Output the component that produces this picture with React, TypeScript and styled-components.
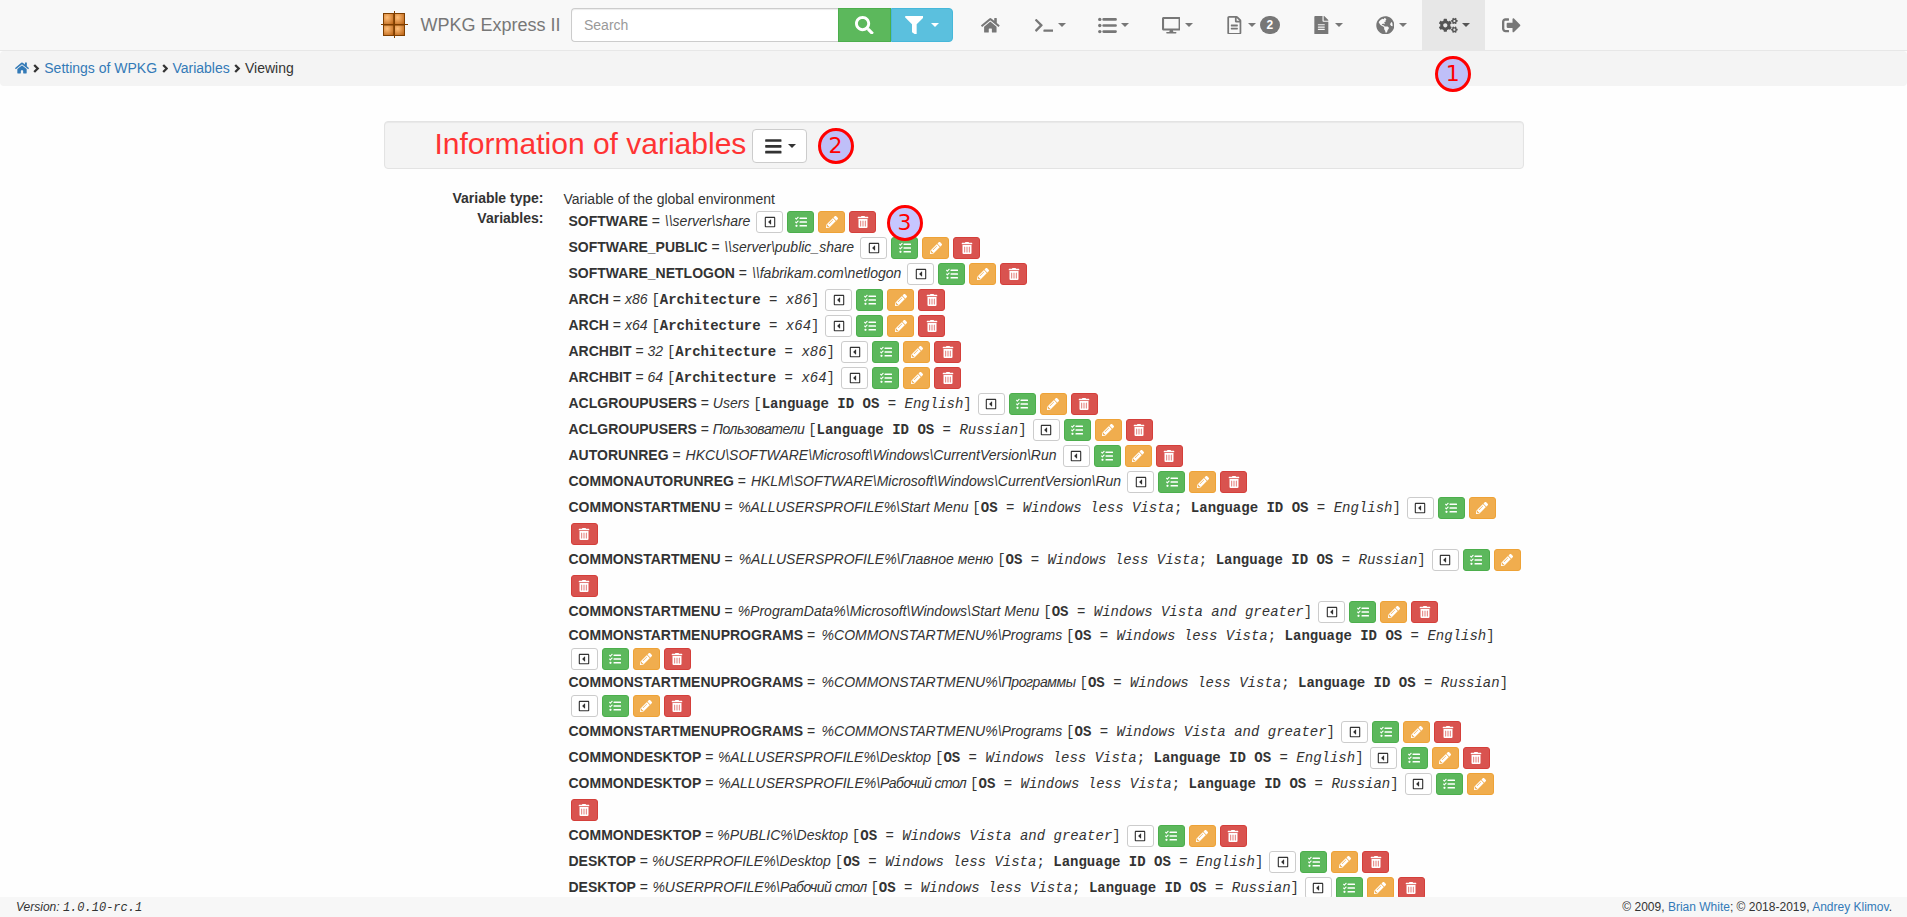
import React from 'react';
import styled, { createGlobalStyle } from 'styled-components';
import {
  FaHome, FaTerminal, FaDesktop, FaRegFileAlt, FaFileAlt, FaGlobeAmericas, FaCogs,
  FaSignOutAlt, FaSearch, FaFilter, FaBars, FaRegCaretSquareLeft, FaTasks,
  FaPencilAlt, FaTrashAlt,
} from 'react-icons/fa';

const GlobalStyle = createGlobalStyle`
  *, *::before, *::after { box-sizing: border-box; }
  body {
    margin: 0;
    background: #fefefe;
    color: #333;
    font: 14px/20px "Liberation Sans", Arial, sans-serif;
  }
  a { color: #337ab7; text-decoration: none; }
  svg { display: block; flex: none; width: auto; }
`;

const Page = styled.div`
  display: flex;
  flex-direction: column;
  height: 917px;
  overflow: hidden;
`;

const Navbar = styled.header`
  display: flex;
  flex: none;
  height: 51px;
  padding-left: 380px;
  background: #f8f8f8;
  border-bottom: 1px solid #e7e7e7;
`;

const Brand = styled.div`
  display: flex;
  align-items: center;
  width: 191px;
  height: 50px;
  gap: 12.5px;
  color: #777;
  font-size: 18px;
  white-space: nowrap;
`;

const SearchGroup = styled.div`
  display: flex;
  width: 382px;
  height: 34px;
  margin: 8px 11px 0 0;
`;

const SearchInput = styled.input`
  flex: 1;
  min-width: 0;
  padding: 6px 12px;
  font: inherit;
  background: #fff;
  border: 1px solid #ccc;
  border-right: 0;
  border-radius: 4px 0 0 4px;
  box-shadow: inset 0 1px 1px rgba(0, 0, 0, 0.075);
  &::placeholder { color: #999; opacity: 1; }
`;

const GroupButton = styled.button<{ $bg: string; $line: string; $w: number; $last?: boolean }>`
  display: flex;
  align-items: center;
  justify-content: center;
  gap: 8px;
  width: ${p => p.$w}px;
  padding: 0;
  color: #fff;
  font-size: 18.67px;
  background: ${p => p.$bg};
  border: 1px solid ${p => p.$line};
  border-radius: ${p => (p.$last ? '0 4px 4px 0' : '0')};
`;

const Caret = styled.span`
  width: 8px;
  height: 4px;
  border-top: 4px solid currentColor;
  border-left: 4px solid transparent;
  border-right: 4px solid transparent;
`;

const NavItem = styled.div<{ $active?: boolean }>`
  position: relative;
  display: flex;
  align-items: center;
  height: 50px;
  padding: 0 15px;
  color: ${p => (p.$active ? '#555' : '#777')};
  background: ${p => (p.$active ? '#e7e7e7' : 'transparent')};
  ${Caret} { margin-left: 2px; }
`;

const IconBox = styled.span`
  display: flex;
  justify-content: center;
  width: 23.4px;
  font-size: 18.67px;
`;

const Badge = styled.span`
  width: 20px;
  height: 18px;
  margin-left: 4px;
  color: #fff;
  background: #777;
  border-radius: 10px;
  font: bold 12px/18px "Liberation Sans", Arial, sans-serif;
  text-align: center;
`;

const Marker = styled.span<{ $left: number; $top: number; $fill?: string }>`
  position: absolute;
  z-index: 2;
  left: ${p => p.$left}px;
  top: ${p => p.$top}px;
  width: 36px;
  height: 36px;
  color: #f00;
  background: ${p => p.$fill || '#bfbff8'};
  border: 3px solid #f00;
  border-radius: 50%;
  font: 22px/29px "DejaVu Sans", sans-serif;
  text-align: center;
`;

const Breadcrumb = styled.nav`
  display: flex;
  flex: none;
  align-items: center;
  height: 35px;
  padding: 0 15px 1px;
  gap: 4.4px;
  background: #f4f4f4;
  border-radius: 4px;
`;

const Main = styled.main`
  flex: 1;
  min-height: 0;
  width: 1140px;
  margin: 35px 0 0 383.5px;
`;

const TitleBar = styled.div`
  position: relative;
  display: flex;
  height: 48px;
  padding: 7px 0 0 50px;
  gap: 6px;
  background: #f4f4f4;
  border: 1px solid #e3e3e3;
  border-radius: 4px;
  box-shadow: inset 0 1px 1px rgba(0, 0, 0, 0.05);
`;

const Title = styled.h1`
  margin: 0;
  color: #ff3333;
  font-size: 30px;
  font-weight: 400;
  line-height: 30px;
`;

const MenuButton = styled.button`
  display: flex;
  align-items: center;
  justify-content: center;
  gap: 5px;
  width: 55px;
  height: 34px;
  padding: 0;
  color: #333;
  font-size: 18.67px;
  background: #fff;
  border: 1px solid #ccc;
  border-radius: 4px;
`;

const Details = styled.div`
  position: relative;
  display: flex;
  gap: 20px;
  margin-top: 19px;
`;

const Terms = styled.div`
  width: 160px;
  font-weight: 700;
  text-align: right;
`;

const Values = styled.div`
  flex: 1;
  padding-top: 1px;
`;

const VariableRow = styled.div`
  display: flex;
  flex-wrap: wrap;
  align-items: center;
  padding-left: 5px;
`;

const VariableText = styled.div`
  height: 21px;
  margin: -0.3px 4px 0.3px 0;
  white-space: nowrap;
`;

const Value = styled.i<{ $lead?: number }>`
  margin-left: ${p => p.$lead || 0}px;
`;

const Tracked = styled.span<{ $track?: number }>`
  letter-spacing: ${p => p.$track || 0}px;
`;

const Condition = styled.span`
  font-family: "Liberation Mono", monospace;
`;

const tones = {
  plain: ['#333', '#fff', '#ccc'],
  green: ['#fff', '#5cb85c', '#4cae4c'],
  orange: ['#fff', '#f0ad4e', '#eea236'],
  red: ['#fff', '#d9534f', '#d43f3a'],
};

const SmallButton = styled.button<{ $tone: keyof typeof tones }>`
  display: flex;
  align-items: center;
  justify-content: center;
  width: 27px;
  height: 22px;
  margin: 2px;
  padding: 0 0 1px;
  font-size: 12px;
  color: ${p => tones[p.$tone][0]};
  background: ${p => tones[p.$tone][1]};
  border: 1px solid ${p => tones[p.$tone][2]};
  border-radius: 3px;
`;

const Footer = styled.footer`
  position: relative;
  z-index: 3;
  display: flex;
  flex: none;
  justify-content: space-between;
  height: 20px;
  padding: 0 15px 0 16px;
  background: #f7f7f7;
  font-size: 12px;
  line-height: 21px;
`;

type Cond = [string, string];
const winOld: Cond = ['OS', 'Windows less Vista'];
const winNew: Cond = ['OS', 'Windows Vista and greater'];
const english: Cond = ['Language ID OS', 'English'];
const russian: Cond = ['Language ID OS', 'Russian'];

// `lead` is the extra space before the value, `track` the letter spacing of its Cyrillic part.
type Variable = { name: string; value: string; conds?: Cond[]; lead?: number; track?: number };

const variables: Variable[] = [
  { name: 'SOFTWARE', value: '\\\\server\\share', lead: 1 },
  { name: 'SOFTWARE_PUBLIC', value: '\\\\server\\public_share', lead: 0.5 },
  { name: 'SOFTWARE_NETLOGON', value: '\\\\fabrikam.com\\netlogon', lead: 1 },
  { name: 'ARCH', value: 'x86', conds: [['Architecture', 'x86']] },
  { name: 'ARCH', value: 'x64', conds: [['Architecture', 'x64']] },
  { name: 'ARCHBIT', value: '32', conds: [['Architecture', 'x86']] },
  { name: 'ARCHBIT', value: '64', conds: [['Architecture', 'x64']] },
  { name: 'ACLGROUPUSERS', value: 'Users', conds: [english] },
  { name: 'ACLGROUPUSERS', value: 'Пользователи', conds: [russian], track: -0.42 },
  { name: 'AUTORUNREG', value: 'HKCU\\SOFTWARE\\Microsoft\\Windows\\CurrentVersion\\Run', lead: 1 },
  { name: 'COMMONAUTORUNREG', value: 'HKLM\\SOFTWARE\\Microsoft\\Windows\\CurrentVersion\\Run', lead: 1 },
  { name: 'COMMONSTARTMENU', value: '%ALLUSERSPROFILE%\\Start Menu', conds: [winOld, english], lead: 1.5 },
  { name: 'COMMONSTARTMENU', value: '%ALLUSERSPROFILE%\\Главное меню', conds: [winOld, russian], lead: 2 },
  { name: 'COMMONSTARTMENU', value: '%ProgramData%\\Microsoft\\Windows\\Start Menu', conds: [winNew], lead: 1 },
  { name: 'COMMONSTARTMENUPROGRAMS', value: '%COMMONSTARTMENU%\\Programs', conds: [winOld, english], lead: 2.5 },
  { name: 'COMMONSTARTMENUPROGRAMS', value: '%COMMONSTARTMENU%\\Программы', conds: [winOld, russian], lead: 2.5, track: -0.4 },
  { name: 'COMMONSTARTMENUPROGRAMS', value: '%COMMONSTARTMENU%\\Programs', conds: [winNew], lead: 2.5 },
  { name: 'COMMONDESKTOP', value: '%ALLUSERSPROFILE%\\Desktop', conds: [winOld, english], lead: 0.7 },
  { name: 'COMMONDESKTOP', value: '%ALLUSERSPROFILE%\\Рабочий стол', conds: [winOld, russian], lead: 1, track: -0.55 },
  { name: 'COMMONDESKTOP', value: '%PUBLIC%\\Desktop', conds: [winNew] },
  { name: 'DESKTOP', value: '%USERPROFILE%\\Desktop', conds: [winOld, english] },
  { name: 'DESKTOP', value: '%USERPROFILE%\\Рабочий стол', conds: [winOld, russian], lead: 0.5, track: -0.52 },
];

const Logo = () => (
  <svg width="28" height="28" viewBox="0 0 28 28">
    <defs>
      <radialGradient id="box" cx="0.35" cy="0.35" r="0.8">
        <stop offset="0" stopColor="#ffbe78" />
        <stop offset="1" stopColor="#bb6417" />
      </radialGradient>
    </defs>
    <g fill="url(#box)" stroke="#7f3f00">
      <rect x="3.5" y="2.5" width="10.5" height="11.5" />
      <rect x="14" y="2.5" width="10.5" height="11.5" />
      <rect x="3.5" y="14" width="10.5" height="10.5" />
      <rect x="14" y="14" width="10.5" height="10.5" />
    </g>
    <path d="M14.5 0V27M1 13.5H28" stroke="#7f3f00" />
  </svg>
);

const BulletList = () => (
  <svg width="19" height="17" viewBox="0 0 19 17" fill="currentColor">
    <circle cx="1.8" cy="2.4" r="1.7" />
    <circle cx="1.8" cy="8.5" r="1.7" />
    <circle cx="1.8" cy="14.6" r="1.7" />
    <path
      d="M5.6 2.4H17.6M5.6 8.5H17.6M5.6 14.6H17.6"
      stroke="currentColor" strokeWidth="2.6" strokeLinecap="round"
    />
  </svg>
);

const Chevron = () => (
  <svg width="6.5" height="9" viewBox="0 0 6.5 9" fill="none">
    <path d="M1.2 1L4.7 4.5L1.2 8" stroke="#333" strokeWidth="2.3" />
  </svg>
);

export default function App() {
  return (
    <Page>
      <GlobalStyle />
      <Navbar>
        <Brand><Logo />WPKG Express II</Brand>
        <SearchGroup>
          <SearchInput placeholder="Search" />
          <GroupButton $bg="#5cb85c" $line="#4cae4c" $w={53}><FaSearch /></GroupButton>
          <GroupButton $bg="#5bc0de" $line="#46b8da" $w={62} $last><FaFilter /><Caret /></GroupButton>
        </SearchGroup>
        <NavItem><IconBox><FaHome /></IconBox></NavItem>
        <NavItem><IconBox><FaTerminal /></IconBox><Caret /></NavItem>
        <NavItem><IconBox><BulletList /></IconBox><Caret /></NavItem>
        <NavItem><IconBox><FaDesktop /></IconBox><Caret /></NavItem>
        <NavItem><IconBox><FaRegFileAlt /></IconBox><Caret /><Badge>2</Badge></NavItem>
        <NavItem><IconBox><FaFileAlt /></IconBox><Caret /></NavItem>
        <NavItem><IconBox><FaGlobeAmericas /></IconBox><Caret /></NavItem>
        <NavItem $active>
          <IconBox><FaCogs /></IconBox><Caret />
          <Marker $left={13} $top={56}>1</Marker>
        </NavItem>
        <NavItem><IconBox><FaSignOutAlt /></IconBox></NavItem>
      </Navbar>
      <Breadcrumb>
        <a href="#"><FaHome size={14} /></a><Chevron />
        <a href="#">Settings of WPKG</a><Chevron />
        <a href="#">Variables</a><Chevron />
        <span>Viewing</span>
      </Breadcrumb>
      <Main>
        <TitleBar>
          <Title>Information of variables</Title>
          <MenuButton><FaBars /><Caret /></MenuButton>
          <Marker $left={433} $top={6}>2</Marker>
        </TitleBar>
        <Details>
          <Terms>
            <div>Variable type:</div>
            <div>Variables:</div>
          </Terms>
          <Values>
            <div>Variable of the global environment</div>
            {variables.map((v, i) => (
              <VariableRow key={i}>
                <VariableText>
                  <b>{v.name}</b> ={' '}
                  <Value $lead={v.lead}>
                    {v.value.split(/([А-Яа-я ]*[А-Яа-я])/).map((part, n) => (
                      n % 2 ? <Tracked key={n} $track={v.track}>{part}</Tracked> : part
                    ))}
                  </Value>
                  {v.conds && (
                    <>
                      {' '}
                      <Condition>
                        [{v.conds.map(([key, value], n) => (
                          <React.Fragment key={key}>
                            {n > 0 && '; '}<b>{key}</b> = <i>{value}</i>
                          </React.Fragment>
                        ))}]
                      </Condition>
                    </>
                  )}
                </VariableText>
                <SmallButton $tone="plain"><FaRegCaretSquareLeft /></SmallButton>
                <SmallButton $tone="green"><FaTasks /></SmallButton>
                <SmallButton $tone="orange"><FaPencilAlt /></SmallButton>
                <SmallButton $tone="red"><FaTrashAlt /></SmallButton>
              </VariableRow>
            ))}
          </Values>
          <Marker $left={503} $top={17} $fill="#c6c6ff">3</Marker>
        </Details>
      </Main>
      <Footer>
        <i>Version: <Condition>1.0.10-rc.1</Condition></i>
        <span>© 2009, <a href="#">Brian White</a>; © 2018-2019, <a href="#">Andrey Klimov</a>.</span>
      </Footer>
    </Page>
  );
}
